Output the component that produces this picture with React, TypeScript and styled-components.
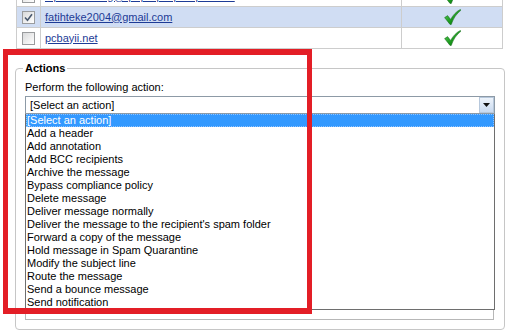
import React from 'react';
import styled, { createGlobalStyle } from 'styled-components';

const GlobalStyle = createGlobalStyle`
  html, body {
    margin: 0;
    padding: 0;
    background: #ffffff;
  }
  body {
    font-family: 'Liberation Sans', Arial, sans-serif;
    font-size: 11px;
    color: #000000;
  }
`;

const ACTIONS = [
  '[Select an action]',
  'Add a header',
  'Add annotation',
  'Add BCC recipients',
  'Archive the message',
  'Bypass compliance policy',
  'Delete message',
  'Deliver message normally',
  "Deliver the message to the recipient's spam folder",
  'Forward a copy of the message',
  'Hold message in Spam Quarantine',
  'Modify the subject line',
  'Route the message',
  'Send a bounce message',
  'Send notification',
];

const RECIPIENTS = [
  { address: 'alpaslanmang@qeqreq.superoper.com', checked: false },
  { address: 'fatihteke2004@gmail.com', checked: true },
  { address: 'pcbayii.net', checked: false },
];

const Page = styled.div`
  position: relative;
  width: 515px;
  height: 333px;
  overflow: hidden;
`;

const RecipientTable = styled.table`
  margin: -15px 0 0 16px;
  width: 487px;
  border-collapse: collapse;
  table-layout: fixed;
`;

const Row = styled.tr<{ $selected?: boolean }>`
  background: ${p => (p.$selected ? '#d0ddf3' : '#ffffff')};
`;

const Cell = styled.td<{ $center?: boolean }>`
  height: 20px;
  padding: 0 0 0 ${p => (p.$center ? 0 : 4)}px;
  border: 1px solid #cdcdcd;
  text-align: ${p => (p.$center ? 'center' : 'left')};
  vertical-align: middle;
  line-height: 13px;
`;

const Address = styled.a`
  color: #1d3b96;
  text-decoration: underline;
`;

const CheckBox = styled.span`
  display: inline-flex;
  align-items: center;
  justify-content: center;
  width: 11px;
  height: 11px;
  border: 1px solid #9a9c9e;
  background: linear-gradient(135deg, #d9dadb 0%, #f4f4f4 70%, #ffffff 100%);
  vertical-align: middle;
`;

const Actions = styled.fieldset`
  margin: 12px 10px 0 15px;
  padding: 6px 9px 9px 9px;
  min-width: 0;
  border: 1px solid #c6c6c6;
  border-radius: 4px;
`;

const Legend = styled.legend`
  padding: 0 2px;
  margin-left: -2px;
  font-weight: bold;
  line-height: 14px;
`;

const FieldLabel = styled.div`
  line-height: 13px;
  margin-bottom: 2px;
`;

const SelectWrap = styled.div`
  position: relative;
`;

const SelectBox = styled.div`
  display: flex;
  align-items: center;
  height: 16px;
  padding-left: 4px;
  border: 1px solid #8d9aa6;
  line-height: 16px;
`;

const SelectValue = styled.span`
  flex: 1;
`;

const ArrowButton = styled.span`
  display: flex;
  align-items: center;
  justify-content: center;
  box-sizing: border-box;
  width: 15px;
  height: 16px;
  border: 1px solid #b7c8dc;
  background: linear-gradient(#eef4fb, #c9daf0);
`;

const DetailsBox = styled.div`
  height: 205px;
  margin-right: 1px;
  border: 1px solid #b7b7b7;
  border-top: none;
`;

const OptionList = styled.ul`
  position: absolute;
  top: 100%;
  left: 0;
  right: 0;
  margin: 0;
  padding: 0;
  list-style: none;
  background: #ffffff;
  border: 1px solid #6e6e6e;
  border-top: none;
  z-index: 2;
`;

const Option = styled.li<{ $active?: boolean }>`
  height: 13px;
  line-height: 13px;
  padding-left: 1px;
  white-space: nowrap;
  background: ${p => (p.$active ? '#3399ff' : 'transparent')};
  color: ${p => (p.$active ? '#ffffff' : '#000000')};
  outline: ${p => (p.$active ? '1px dotted #8fc3ff' : 'none')};
  outline-offset: -1px;
`;

const Annotation = styled.div`
  position: absolute;
  left: 3px;
  top: 49px;
  width: 309px;
  height: 265px;
  box-sizing: border-box;
  border-style: solid;
  border-color: #e31e26;
  border-width: 6px 5px 6px 5px;
  pointer-events: none;
  z-index: 5;
`;

const TickMark = () => (
  <svg width="9" height="9" viewBox="0 0 9 9">
    <path d="M1 4.5 L3.5 7.2 L8 1.2" fill="none" stroke="#4a5a70" strokeWidth="1.6" />
  </svg>
);

const GreenCheck = () => (
  <svg width="17" height="16" viewBox="0 0 17 16" style={{ verticalAlign: 'middle' }}>
    <defs>
      <linearGradient id="gc" x1="0" y1="0" x2="1" y2="1">
        <stop offset="0" stopColor="#5fd35f" />
        <stop offset="0.6" stopColor="#17961a" />
        <stop offset="1" stopColor="#0b6a10" />
      </linearGradient>
    </defs>
    <path
      d="M0.6 8.6 L3.6 6.6 L6.6 10.4 C9 6 12.2 2.6 16.4 0.4 L16.9 1.3 C12.6 4.6 9.6 8.8 7.3 15.4 L6 15.4 Z"
      fill="url(#gc)"
      stroke="#0c5e12"
      strokeWidth="0.5"
    />
  </svg>
);

export default function App() {
  return (
    <Page>
      <GlobalStyle />
      <RecipientTable>
        <colgroup>
          <col style={{ width: 24 }} />
          <col style={{ width: 361 }} />
          <col />
        </colgroup>
        <tbody>
          {RECIPIENTS.map(r => (
            <Row key={r.address} $selected={r.checked}>
              <Cell $center>
                <CheckBox>{r.checked && <TickMark />}</CheckBox>
              </Cell>
              <Cell>
                <Address href="#">{r.address}</Address>
              </Cell>
              <Cell $center>
                <GreenCheck />
              </Cell>
            </Row>
          ))}
        </tbody>
      </RecipientTable>

      <Actions>
        <Legend>Actions</Legend>
        <FieldLabel>Perform the following action:</FieldLabel>
        <SelectWrap>
          <SelectBox>
            <SelectValue>[Select an action]</SelectValue>
            <ArrowButton>
              <svg width="7" height="4" viewBox="0 0 7 4">
                <path d="M0 0 H7 L3.5 4 Z" fill="#111" />
              </svg>
            </ArrowButton>
          </SelectBox>
          <OptionList>
            {ACTIONS.map((a, i) => (
              <Option key={a} $active={i === 0}>
                {a}
              </Option>
            ))}
          </OptionList>
        </SelectWrap>
        <DetailsBox />
      </Actions>

      <Annotation />
    </Page>
  );
}
